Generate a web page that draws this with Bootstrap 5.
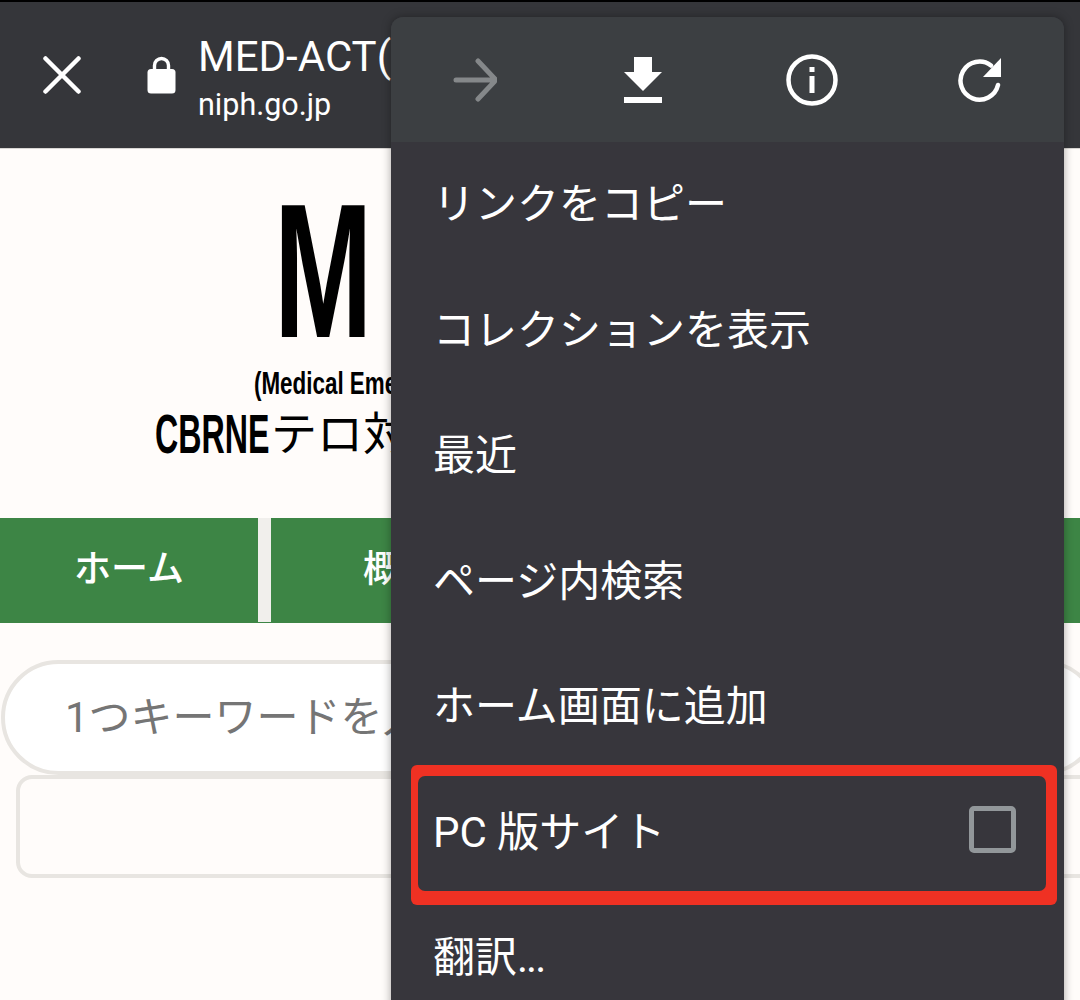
<!DOCTYPE html>
<html lang="ja">
<head>
    <meta charset="UTF-8">
    <title>MED-ACT</title>
    <link href="https://cdn.jsdelivr.net/npm/bootstrap@5.3.0/dist/css/bootstrap.min.css" rel="stylesheet">
    <script src="https://cdn.jsdelivr.net/npm/bootstrap@5.3.0/dist/js/bootstrap.bundle.min.js"></script>
    <style>
        html, body {
            height: 1000px;
            overflow: hidden;
        }

        body {
            position: relative;
            background: #fffcfa;
            font-family: Roboto, "Noto Sans CJK JP", sans-serif;
        }

        .status-edge { height: 2px; background: #000; }

        .tool-bar {
            height: 147px;
            background: #35363a;
            color: #fff;
            border-bottom: 1px solid #d8d6d3;
        }

        .close-btn { margin-left: 43px; width: 38px; flex: none; }
        .lock-btn { margin-left: 66px; width: 29px; flex: none; }

        .url-box { margin-left: 22px; margin-top: 6px; white-space: nowrap; }
        .url-title { font-size: 42px; line-height: 46px; }
        .url-host { font-size: 30.5px; line-height: 34px; margin-top: 8px; }

        .logo-area { height: 369px; color: #000; overflow: hidden; }

        .logo-big, .logo-sub, .logo-jp {
            font-family: "Liberation Sans", "Noto Sans CJK JP", sans-serif;
            font-weight: 700;
            white-space: nowrap;
        }

        .logo-big {
            font-size: 192px;
            line-height: 170px;
            margin: 37px 0 0 274px;
            transform: scaleX(.615);
            transform-origin: left top;
        }

        .logo-sub {
            font-size: 32px;
            line-height: 36px;
            margin: 9px 0 0 254px;
            transform: scaleX(.7);
            transform-origin: left;
        }

        .logo-jp { height: 60px; margin: 3px 0 0 155px; display: flex; align-items: center; }
        .logo-latin {
            font-size: 55px;
            width: 116px;
            flex: none;
            transform: scaleX(.585);
            transform-origin: left;
        }
        .logo-kana { font-size: 46px; font-weight: 400; }

        .green-nav { height: 105px; background: #3d8545; }
        .green-tab {
            height: 104px;
            color: #fff;
            font-size: 37px;
            font-weight: 500;
            display: flex;
            align-items: center;
            justify-content: center;
        }
        .tab-home { width: 258px; }
        .tab-gap { width: 13px; height: 104px; background: #f1efec; }
        .tab-other { width: 258px; }

        .search-area { padding-top: 37px; }
        .search-pill {
            width: 1100px;
            height: 115px;
            margin-left: 1px;
            background: #fff;
            border: 4px solid #e8e5e1;
            border-radius: 58px;
            padding-left: 60px;
            font-size: 42px;
            line-height: 107px;
            color: #757575;
            white-space: nowrap;
        }
        .search-btn {
            width: 1100px;
            height: 103px;
            margin-left: 16px;
            border: 4px solid #e8e5e1;
            border-radius: 16px;
        }

        .popup-menu {
            position: absolute;
            left: 391px;
            top: 17px;
            width: 673px;
            height: 1000px;
            background: #37363c;
            border-radius: 12px 12px 0 0;
            box-shadow: 0 0 10px rgba(0, 0, 0, .35);
            color: #fff;
        }

        .icon-row {
            height: 125px;
            background: #3c3f42;
            border-radius: 12px 12px 0 0;
        }
        .icon-cell { width: 168px; }

        .menu-row {
            position: relative;
            z-index: 1;
            height: 125.5px;
            padding-left: 42px;
            padding-right: 48px;
            font-size: 42px;
            white-space: nowrap;
        }
        .tight-dots { letter-spacing: -2px; }

        /* red marker sits under the rows, inner fill gives the rounded inside corners */
        .red-box {
            position: absolute;
            left: 20px;
            top: 748px;
            width: 646px;
            height: 140px;
            background: #ef3123;
            border-radius: 6px;
            padding: 11px 11px 14px 7px;
        }
        .red-inner {
            height: 100%;
            background: #37363c;
            border-radius: 7px;
        }

        .check-box {
            width: 47px;
            height: 47px;
            margin-bottom: 6px;
            border: 5px solid #92979a;
            border-radius: 5px;
        }
    </style>
</head>
<body>
    <div class="status-edge"></div>
    <div class="tool-bar d-flex align-items-center">
        <svg class="close-btn" viewBox="0 0 38 38" height="38">
            <path d="M2.5 2.5 L35.5 35.5 M35.5 2.5 L2.5 35.5" stroke="#fff" stroke-width="4.5" stroke-linecap="round" fill="none"/>
        </svg>
        <svg class="lock-btn" viewBox="0 0 29 38" height="38">
            <path d="M7.5 14 V9.5 a7 7 0 0 1 14 0 V14" stroke="#fff" stroke-width="3.4" fill="none"/>
            <rect x="0.5" y="13" width="28" height="24.5" rx="3.5" fill="#fff"/>
        </svg>
        <div class="url-box">
            <div class="url-title">MED-ACT(</div>
            <div class="url-host">niph.go.jp</div>
        </div>
    </div>

    <div class="logo-area">
        <div class="logo-big">M</div>
        <div class="logo-sub">(Medical Eme</div>
        <div class="logo-jp"><span class="logo-latin">CBRNE</span><span class="logo-kana">テロ対</span></div>
    </div>

    <div class="green-nav d-flex">
        <div class="green-tab tab-home">ホーム</div>
        <div class="tab-gap"></div>
        <div class="green-tab tab-other">概要</div>
    </div>

    <div class="search-area">
        <div class="search-pill">1つキーワードを入</div>
        <div class="search-btn"></div>
    </div>

    <div class="popup-menu">
        <div class="icon-row d-flex align-items-center justify-content-around px-0">
            <div class="icon-cell d-flex justify-content-center">
                <svg width="44" height="44" viewBox="0 0 44 44">
                    <path d="M3 22 H43 M25 3 L43 22 L25 41" stroke="#85888a" stroke-width="5" stroke-linecap="round" stroke-linejoin="round" fill="none"/>
                </svg>
            </div>
            <div class="icon-cell d-flex justify-content-center">
                <svg width="38" height="46" viewBox="0 0 38 46">
                    <path d="M10 0 H28 V15 H38 L19 34 L0 15 H10 Z M0 40 H38 V46 H0 Z" fill="#fff"/>
                </svg>
            </div>
            <div class="icon-cell d-flex justify-content-center">
                <svg width="52" height="52" viewBox="0 0 52 52">
                    <circle cx="26" cy="26" r="23.5" stroke="#fff" stroke-width="4.5" fill="none"/>
                    <path d="M23.5 13 H28.5 V18 H23.5 Z M23.5 22 H28.5 V39 H23.5 Z" fill="#fff"/>
                </svg>
            </div>
            <div class="icon-cell d-flex justify-content-center">
                <svg width="44" height="44" viewBox="0 0 44 44">
                    <path d="M33 7.5 A19 19 0 1 0 40 27" stroke="#fff" stroke-width="4.5" stroke-linecap="round" fill="none"/>
                    <path d="M43 0 V19 H25 Z" fill="#fff"/>
                </svg>
            </div>
        </div>
        <div class="menu-row d-flex align-items-center">リンクをコピー</div>
        <div class="menu-row d-flex align-items-center">コレクションを表示</div>
        <div class="menu-row d-flex align-items-center">最近</div>
        <div class="menu-row d-flex align-items-center">ページ内検索</div>
        <div class="menu-row d-flex align-items-center">ホーム画面に追加</div>
        <div class="menu-row d-flex align-items-center justify-content-between">
            <span>PC 版サイト</span>
            <div class="check-box"></div>
        </div>
        <div class="menu-row d-flex align-items-center"><span>翻訳<span class="tight-dots">...</span></span></div>
        <div class="red-box"><div class="red-inner"></div></div>
    </div>
</body>
</html>
